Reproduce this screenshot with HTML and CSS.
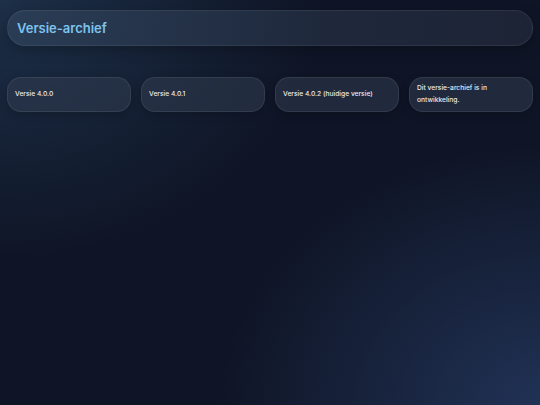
FILE: index.html
```html
<!DOCTYPE html>
<html lang="nl">
<head>
<meta charset="utf-8">
<title>Versie-archief</title>
<link rel="stylesheet" href="styles.css">
</head>
<body>
<div class="page">
  <header class="header">
    <h1 class="title">Versie-archief</h1>
  </header>
  <div class="cards">
    <div class="card">Versie 4.0.0</div>
    <div class="card">Versie 4.0.1</div>
    <div class="card">Versie 4.0.2 (huidige versie)</div>
    <div class="card">Dit versie-archief is in ontwikkeling.</div>
  </div>
</div>
</body>
</html>
```
FILE: styles.css
```css
html, body {
  margin: 0;
  height: 100%;
}
body {
  font-family: Inter, "Noto Sans", sans-serif;
  color: #e2e6ee;
  background-color: #0f1526;
  background-image:
    radial-gradient(ellipse 320px 260px at 0% 0%, rgba(40, 70, 100, 0.55), rgba(40, 70, 100, 0) 100%),
    radial-gradient(ellipse 320px 260px at 100% 100%, rgba(40, 62, 105, 0.7), rgba(40, 62, 105, 0) 100%);
  background-repeat: no-repeat;
  overflow: hidden;
}
.page {
  padding: 10px 7px;
  display: flex;
  flex-direction: column;
  gap: 31px;
}
.header {
  height: 36px;
  border-radius: 18px;
  background: linear-gradient(90deg, rgba(60, 80, 105, 0.45), rgba(45, 55, 75, 0.45));
  border: 1px solid rgba(255, 255, 255, 0.07);
  box-sizing: border-box;
  display: flex;
  align-items: center;
  padding: 0 9px;
  box-shadow: 0 4px 14px rgba(0, 0, 0, 0.25);
}
.title {
  margin: 0;
  font-size: 13px;
  font-weight: 600;
  color: #7dc3ec;
}
.cards {
  display: grid;
  grid-template-columns: repeat(4, 1fr);
  gap: 10px;
}
.card {
  height: 35px;
  box-sizing: border-box;
  border-radius: 14px;
  background: rgba(50, 60, 80, 0.55);
  border: 1px solid rgba(255, 255, 255, 0.08);
  display: flex;
  align-items: center;
  padding: 0 7px;
  font-size: 6.7px;
  font-weight: 500;
  line-height: 11.5px;
  color: #e8ebf1;
  box-shadow: 0 3px 10px rgba(0, 0, 0, 0.2);
}
```
